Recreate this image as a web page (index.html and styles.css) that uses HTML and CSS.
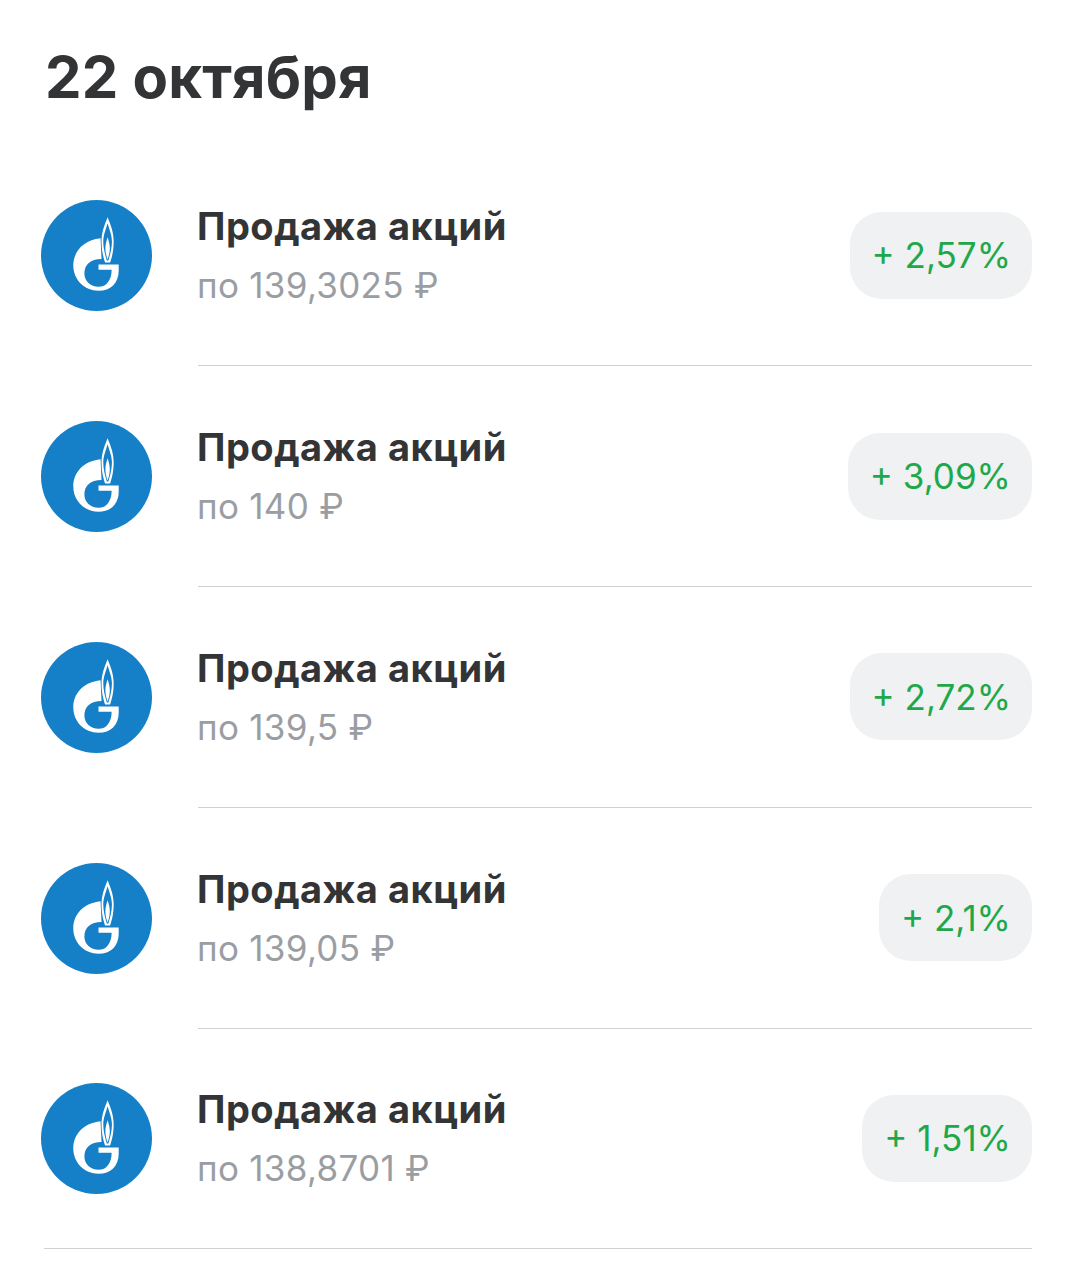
FILE: index.html
```html
<!DOCTYPE html>
<html lang="ru">
<head>
    <meta charset="UTF-8">
    <title>22 октября</title>
    <link rel="stylesheet" href="styles.css">
</head>
<body>
    <svg class="defs" width="0" height="0">
        <symbol id="gazprom" viewBox="0 0 110 110">
            <circle cx="55" cy="55" r="55" fill="#1580c8"/>
            <path fill="#fff" d="M59 38C42 40 32 51 32 65C32 79 43 90 57 90C69 90 77 82 77 70V64H57V69H70C70 79 65 86 57 86C49 86 43 80 43 73C43 64 49 58.500 60 58.500Z"/>
            <path fill="#fff" d="M66 17C62.500 26 60 32 60 41C60 50 61.500 56 63.500 62H68.500C70.500 56 72 50 72 41C72 32 69.500 26 66 17Z"/>
            <path fill="#1580c8" d="M66 23C64 30 61.700 35 61.700 41C61.700 48 63.500 54 65.200 60H66.800C68.500 54 70.300 48 70.300 41C70.300 35 68 30 66 23Z"/>
            <path fill="#fff" d="M66 37C64.800 41 63.800 44 63.800 48C63.800 52 65 56 66 59C67 56 68.200 52 68.200 48C68.200 44 67.200 41 66 37Z"/>
        </symbol>
    </svg>

    <h1 class="date">22 октября</h1>

    <ul class="deals">
        <li class="deal">
            <svg class="logo"><use href="#gazprom"/></svg>
            <div class="deal-body">
                <div class="deal-info">
                    <div class="deal-title">Продажа акций</div>
                    <div class="deal-price">по 139,3025 ₽</div>
                </div>
                <div class="deal-yield">+ 2,57%</div>
            </div>
        </li>
        <li class="deal">
            <svg class="logo"><use href="#gazprom"/></svg>
            <div class="deal-body">
                <div class="deal-info">
                    <div class="deal-title">Продажа акций</div>
                    <div class="deal-price">по 140 ₽</div>
                </div>
                <div class="deal-yield">+ 3,09%</div>
            </div>
        </li>
        <li class="deal">
            <svg class="logo"><use href="#gazprom"/></svg>
            <div class="deal-body">
                <div class="deal-info">
                    <div class="deal-title">Продажа акций</div>
                    <div class="deal-price">по 139,5 ₽</div>
                </div>
                <div class="deal-yield">+ 2,72%</div>
            </div>
        </li>
        <li class="deal">
            <svg class="logo"><use href="#gazprom"/></svg>
            <div class="deal-body">
                <div class="deal-info">
                    <div class="deal-title">Продажа акций</div>
                    <div class="deal-price">по 139,05 ₽</div>
                </div>
                <div class="deal-yield">+ 2,1%</div>
            </div>
        </li>
        <li class="deal">
            <svg class="logo"><use href="#gazprom"/></svg>
            <div class="deal-body">
                <div class="deal-info">
                    <div class="deal-title">Продажа акций</div>
                    <div class="deal-price">по 138,8701 ₽</div>
                </div>
                <div class="deal-yield">+ 1,51%</div>
            </div>
        </li>
    </ul>
</body>
</html>
```

FILE: styles.css
```css
html, body {
    margin: 0;
    padding: 0;
}
body {
    height: 1280px;
    overflow: hidden;
    background-color: #fff;
    font-family: 'Inter', 'Liberation Sans', sans-serif;
    color: #333436;
}
.defs {
    display: block;
    height: 0;
}
.date {
    margin: 0;
    padding: 42px 0 0 45px;
    height: 70px;
    font-size: 58px;
    line-height: 70px;
    font-weight: 700;
    letter-spacing: 0.2px;
}
.deals {
    list-style: none;
    margin: 0;
    padding: 33.5px 44px 0 41px;
}
.deal {
    display: flex;
    height: 220.75px;
    box-sizing: border-box;
}
.deal:last-child {
    margin-left: 3px;
    border-bottom: 1px solid #cfd1d4;
}
.deal:last-child .logo {
    margin-left: -3px;
}
.deal:last-child .deal-body {
    border-bottom: none;
}
.logo {
    width: 111px;
    height: 111px;
    flex: none;
    align-self: center;
}
.deal-body {
    flex: 1;
    display: flex;
    align-items: center;
    margin-left: 46px;
    border-bottom: 1px solid #cfd1d4;
}
.deal-info {
    flex: 1;
    margin-left: -1px;
    padding-top: 1px;
}
.deal-title {
    font-size: 38px;
    line-height: 44px;
    font-weight: 700;
    letter-spacing: 0.5px;
}
.deal-price {
    margin-top: 15px;
    font-size: 35px;
    line-height: 44px;
    letter-spacing: 0.3px;
    color: #9a9ea3;
}
.deal-yield {
    display: flex;
    align-items: center;
    height: 87px;
    padding: 0 21px 0 22px;
    border-radius: 32px;
    background-color: #eff1f2;
    font-size: 35px;
    color: #1fa84a;
}
```
